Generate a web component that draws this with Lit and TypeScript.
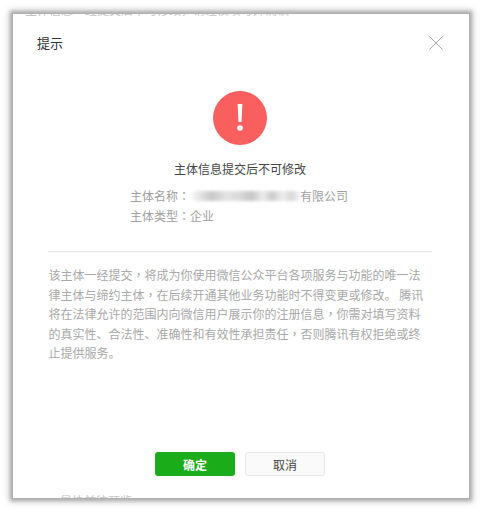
import { LitElement, html, css } from "lit";
import { customElement } from "lit/decorators.js";

const DESC_LINES = [
  ["该主体一经提交", "，", "将成为你使用微信公众平台各项服务与功能的唯一法"],
  ["律主体与缔约主体", "，", "在后续开通其他业务功能时不得变更或修改。 腾讯"],
  ["将在法律允许的范围内向微信用户展示你的注册信息", "，", "你需对填写资料"],
  ["的真实性、合法性、准确性和有效性承担责任", "，", "否则腾讯有权拒绝或终"],
  ["止提供服务。"],
];

@customElement("app-root")
export class AppRoot extends LitElement {
  static styles = css`
    :host {
      display: block;
      width: 484px;
      height: 512px;
      background: #fff;
      overflow: hidden;
      font-family: "Noto Sans CJK SC", "Liberation Sans", sans-serif;
    }
    .page {
      height: 512px;
      box-sizing: border-box;
      padding: 14px 15px 14px 13px;
    }
    .dialog {
      box-sizing: border-box;
      height: 484px;
      background: #fff;
      box-shadow: 0 0 0 1px #b0b0b0, 0 0 4px 3px #a8a8a8, 0 0 8px 5px #e8e8e8;
      display: flex;
      flex-direction: column;
      padding-left: 24px;
      padding-right: 26px;
    }
    .peek {
      overflow: hidden;
      font-size: 12px;
      line-height: 12px;
      color: #c4c4c4;
      white-space: nowrap;
      flex: none;
      display: flex;
    }
    .peek-top {
      height: 2px;
      align-items: flex-end;
      margin-left: -12px;
    }
    .peek-bottom {
      height: 3px;
      align-items: flex-start;
      margin-left: 23px;
    }
    .head {
      display: flex;
      justify-content: space-between;
      align-items: center;
      height: 52px;
      font-size: 13px;
      color: #333;
    }
    .close {
      display: block;
      margin-top: 2px;
    }
    .icon {
      display: block;
      margin: 23px auto 0;
    }
    .title {
      margin-top: 15px;
      text-align: center;
      font-size: 12px;
      line-height: 18px;
      color: #444;
    }
    .info {
      margin-top: 8px;
      padding-left: 93px;
      font-size: 12px;
      line-height: 19.5px;
      color: #a0a0a0;
    }
    .row {
      display: flex;
      align-items: center;
    }
    .c {
      font-family: "Noto Sans CJK TC", sans-serif;
    }
    .blur {
      display: block;
      width: 108px;
      height: 10px;
      margin: 0 0 0 2px;
      background: linear-gradient(
        90deg,
        #f6f6f6,
        #dedede 10%,
        #c8c8c8 18%,
        #e4e4e4 32%,
        #d8d8d8 45%,
        #c6c6c6 55%,
        #ececec 66%,
        #cccccc 74%,
        #eeeeee 84%,
        #d8d8d8 92%,
        #f4f4f4
      );
      filter: blur(1.5px);
    }
    hr {
      border: 0;
      border-top: 1px solid #e6e6e6;
      margin: 26px 11px 0 11px;
    }
    .desc {
      margin: 13px 11px 0 11.5px;
      font-size: 12px;
      line-height: 19.5px;
      color: #a8a8a8;
      white-space: nowrap;
    }
    .actions {
      margin-top: auto;
      margin-bottom: 19px;
      display: flex;
      justify-content: center;
      gap: 10px;
    }
    .btn {
      box-sizing: border-box;
      width: 80px;
      height: 24px;
      border-radius: 3px;
      font: inherit;
      font-size: 12px;
      padding: 0;
    }
    .ok {
      background: #1aad19;
      border: 0;
      color: #fff;
      font-weight: 700;
    }
    .cancel {
      background: #fafafa;
      border: 1px solid #e8e8e8;
      color: #444;
    }
  `;

  render() {
    return html`
      <div class="page">
        <div class="dialog">
          <div class="peek peek-top">主体信息一经提交后不可修改，请谨慎填写并确认</div>
          <div class="head">
            <span>提示</span>
            <svg class="close" width="14" height="14" viewBox="0 0 14 14" fill="none" stroke="#a8a8a8" stroke-width="1">
              <path d="M0.5 0.5 L13.5 13.5 M13.5 0.5 L0.5 13.5"></path>
            </svg>
          </div>
          <svg class="icon" width="54" height="54" viewBox="0 0 54 54">
            <circle cx="27" cy="27" r="27" fill="#fa5f5f"></circle>
            <path d="M24.6 13 H29.4 L28.5 31 H25.5 Z" fill="#fff"></path>
            <circle cx="27" cy="37" r="2.8" fill="#fff"></circle>
          </svg>
          <div class="title">主体信息提交后不可修改</div>
          <div class="info">
            <div class="row">主体名称<span class="c">：</span><i class="blur"></i>有限公司</div>
            <div class="row">主体类型<span class="c">：</span>企业</div>
          </div>
          <hr />
          <div class="desc">
            ${DESC_LINES.map(
              ([a, c, b]) => html`<div>${a}${c ? html`<span class="c">${c}</span>` : ""}${b ?? ""}</div>`
            )}
          </div>
          <div class="actions">
            <button class="btn ok">确定</button>
            <button class="btn cancel">取消</button>
          </div>
          <div class="peek peek-bottom">最快前往预览</div>
        </div>
      </div>
    `;
  }
}
